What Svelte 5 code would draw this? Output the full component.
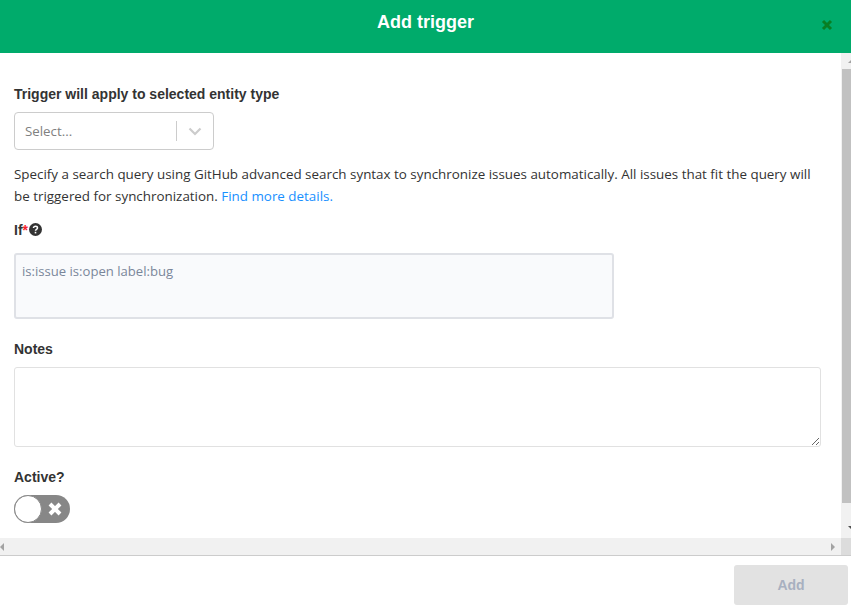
<script lang="ts">
	let active = $state(false);
</script>

<div class="modal">
	<header class="head">
		<h1>Add trigger</h1>
		<button class="close" aria-label="Close">
			<svg width="12" height="12" viewBox="0 0 12 12"><path d="M2 2l8 8M10 2l-8 8" stroke="#087f23" stroke-width="3" /></svg>
		</button>
	</header>

	<div class="scroll-area">
		<div class="view">
			<main class="content">
				<label class="label first" for="entity">Trigger will apply to selected entity type</label>
				<div class="select" id="entity">
					<span class="placeholder">Select...</span>
					<span class="sep"></span>
					<svg class="chev" width="20" height="20" viewBox="0 0 20 20"><path d="M4.500 7.500L10 13l5.500-5.500" fill="none" stroke="#ccc" stroke-width="2.200" /></svg>
				</div>

				<p class="hint">
					Specify a search query using GitHub advanced search syntax to synchronize issues automatically. All issues that fit the query will be triggered for synchronization. <a href="#details">Find more details.</a>
				</p>

				<div class="if-label">
					<span class="plain">If</span><span class="req">*</span>
					<svg class="help" width="13" height="13" viewBox="0 0 13 13">
						<circle cx="6.500" cy="6.500" r="6.500" fill="#333" />
						<path d="M4.500 5.100c0-1.100.9-1.800 2-1.800s2 .7 2 1.700c0 1.400-2 1.400-2 2.800" fill="none" stroke="#fff" stroke-width="1.500" />
						<rect x="5.700" y="8.800" width="1.600" height="1.600" fill="#fff" />
					</svg>
				</div>
				<div class="query">is:issue is:open label:bug</div>

				<label class="label notes-label" for="notes">Notes</label>
				<textarea id="notes" class="notes"></textarea>

				<div class="label active-label">Active?</div>
				<button class="toggle" class:on={active} aria-label="Active" onclick={() => (active = !active)}>
					<span class="knob"></span>
					<svg class="x" width="16" height="16" viewBox="0 0 16 16"><path d="M3 3l10 10M13 3L3 13" stroke="#fff" stroke-width="4" /></svg>
				</button>
			</main>
			<div class="vbar">
				<span class="arrow up"></span>
				<div class="vthumb"></div>
				<span class="arrow down"></span>
			</div>
		</div>
		<div class="hbar">
			<div class="htrack">
				<span class="arrow left"></span>
				<span class="arrow right"></span>
			</div>
			<div class="corner"></div>
		</div>
	</div>

	<footer class="foot">
		<button class="add" disabled>Add</button>
	</footer>
</div>

<style>
	:global(body) {
		margin: 0;
		background: #fff;
	}

	.modal {
		width: 851px;
		height: 609px;
		display: flex;
		flex-direction: column;
		font-family: "Open Sans", sans-serif;
		color: #333;
		overflow: hidden;
	}

	.head {
		height: 53px;
		flex: none;
		background: #00ab6b;
		display: flex;
		align-items: center;
		justify-content: center;
		position: relative;
	}
	.head h1 {
		margin: 0 0 9px;
		font: bold 18px "Liberation Sans", Arial, sans-serif;
		color: #fff;
	}
	.close {
		position: absolute;
		right: 18px;
		top: 19px;
		padding: 0;
		border: 0;
		background: none;
		display: flex;
	}

	.scroll-area {
		height: 502px;
		flex: none;
		display: flex;
		flex-direction: column;
		border-bottom: 1px solid #ccc;
		box-sizing: content-box;
	}
	.view {
		flex: 1;
		display: flex;
		min-height: 0;
	}
	.content {
		flex: 1;
		padding: 33px 20px 0 14px;
		min-width: 0;
	}

	.label {
		display: block;
		font: bold 14px/16px "Liberation Sans", Arial, sans-serif;
		color: #333;
	}

	.select {
		width: 198px;
		height: 36px;
		margin-top: 10px;
		border: 1px solid #ccc;
		border-radius: 4px;
		display: flex;
		align-items: center;
		box-sizing: content-box;
	}
	.placeholder {
		flex: 1;
		padding-left: 10px;
		font-size: 13.300px;
		color: #808080;
	}
	.sep {
		width: 1px;
		height: 20px;
		background: #ccc;
	}
	.chev {
		margin: 0 8px;
	}

	.hint {
		margin: 13px 0 0;
		font-size: 13.400px;
		line-height: 22px;
		color: #333;
	}
	.hint a {
		color: #1890ff;
		text-decoration: none;
	}

	.if-label {
		margin-top: 14px;
		height: 18px;
		display: flex;
		align-items: center;
		font: bold 14px "Liberation Sans", Arial, sans-serif;
	}
	.req {
		color: #f5222d;
		font-weight: bold;
		font-size: 14px;
		margin-right: 1px;
	}
	.help {
		margin-bottom: 1px;
	}

	.query {
		width: 584px;
		height: 50px;
		margin-top: 14px;
		padding: 6px 6px;
		background: #f9fafc;
		border: 2px solid #dfe1e6;
		border-radius: 3px;
		font-size: 13.100px;
		line-height: 20px;
		color: #7a869a;
	}

	.notes-label {
		margin-top: 22px;
	}
	.notes {
		display: block;
		width: 807px;
		height: 80px;
		margin-top: 10px;
		box-sizing: border-box;
		border: 1px solid #e1e1e1;
		border-radius: 3px;
		background: #fff;
	}

	.active-label {
		margin-top: 22px;
	}
	.toggle {
		width: 56px;
		height: 28px;
		margin-top: 10px;
		padding: 0;
		border: 0;
		border-radius: 14px;
		background: #878787;
		position: relative;
		display: block;
	}
	.knob {
		position: absolute;
		left: 0;
		top: 0;
		width: 28px;
		height: 28px;
		box-sizing: border-box;
		border: 1px solid #878787;
		border-radius: 50%;
		background: #fff;
	}
	.x {
		position: absolute;
		left: 33px;
		top: 6px;
	}

	.vbar {
		width: 17px;
		flex: none;
		margin-right: -7px;
		background: #f1f1f1;
		display: flex;
		flex-direction: column;
		align-items: center;
	}
	.vthumb {
		width: 17px;
		flex: 1;
		margin: 0 0 23px 2px;
		background: #c1c1c1;
	}
	.hbar {
		height: 17px;
		flex: none;
		display: flex;
		background: #f1f1f1;
	}
	.htrack {
		flex: 1;
		display: flex;
		justify-content: space-between;
		align-items: center;
		padding: 0 6px 0 0;
	}
	.corner {
		width: 10px;
		background: #dcdcdc;
	}

	.arrow {
		width: 0;
		height: 0;
		display: block;
		border-style: solid;
		border-color: transparent;
	}
	.arrow.up {
		height: 0;
		margin: 6px 0 6px 4px;
		border-width: 0 4px 4px;
		border-bottom-color: #a3a3a3;
	}
	.arrow.down {
		margin: 0 0 8px 4px;
		border-width: 4px 4px 0;
		border-top-color: #505050;
	}
	.arrow.left {
		border-width: 4px 4px 4px 0;
		border-right-color: #a3a3a3;
	}
	.arrow.right {
		border-width: 4px 0 4px 4px;
		border-left-color: #a3a3a3;
	}

	.foot {
		flex: 1;
		display: flex;
		justify-content: flex-end;
		align-items: flex-start;
		padding: 9px 3px 0 0;
	}
	.add {
		width: 114px;
		height: 40px;
		border: 0;
		border-radius: 3px;
		background: #e2e2e2;
		color: #a8b0c0;
		font: bold 14px "Liberation Sans", Arial, sans-serif;
	}
</style>
